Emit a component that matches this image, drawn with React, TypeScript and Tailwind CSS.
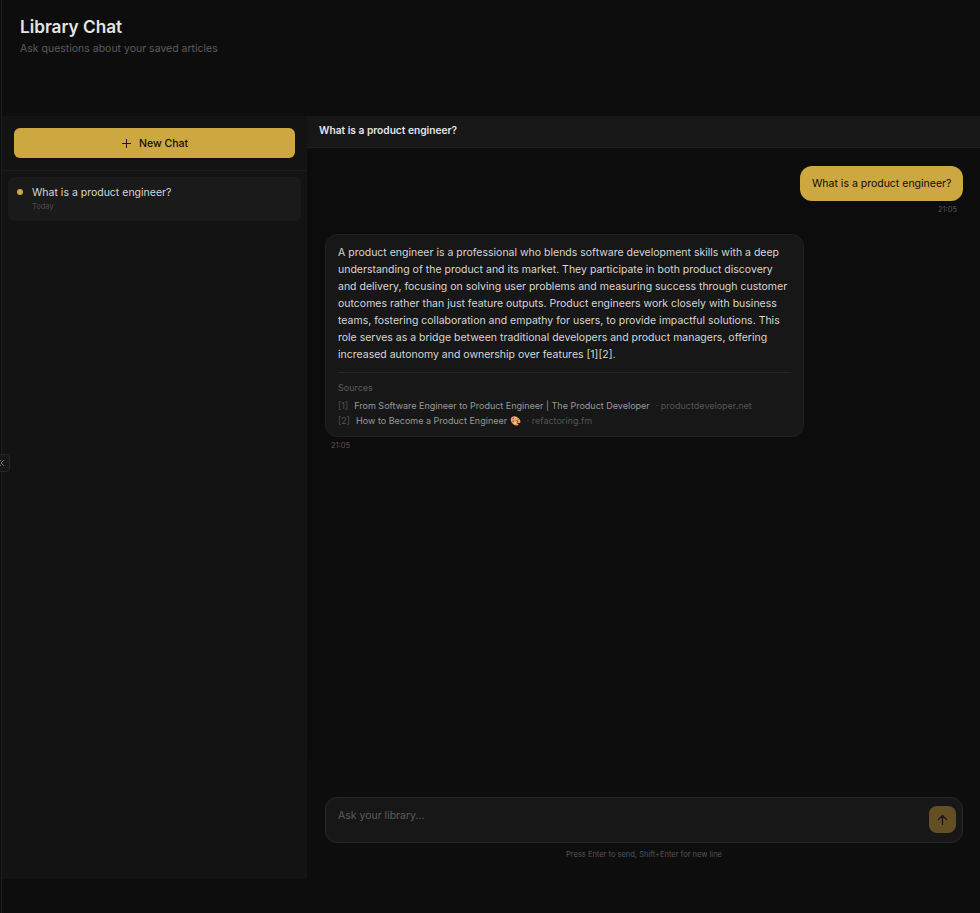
import React from 'react';

const sources = [
  { id: 1, title: 'From Software Engineer to Product Engineer | The Product Developer', site: 'productdeveloper.net' },
  { id: 2, title: 'How to Become a Product Engineer 🎨', site: 'refactoring.fm' },
];

const Sidebar: React.FC = () => {
  return (
    <aside className="flex w-[305px] shrink-0 flex-col bg-[#131313]">
      <div className="border-b border-[#1b1b1b] px-3 pt-3 pb-3">
        <button className="flex h-[30px] w-[281px] items-center justify-center gap-[7px] rounded-md bg-[#cda73f] text-[10.5px] font-medium text-[#0d0d0d]">
          <svg width="11" height="11" viewBox="0 0 11 11" fill="none" stroke="currentColor" strokeWidth="0.9">
            <path d="M5.5 1v9M1 5.5h9" />
          </svg>
          <span className="pt-px">New Chat</span>
        </button>
      </div>
      <div className="px-1.5 pt-1.5">
        <div className="flex h-11 rounded-md bg-[#1a1a1a] pl-[9px]">
          <span className="mt-3 h-1.5 w-1.5 shrink-0 rounded-full bg-[#cda73f]" />
          <div className="ml-[9px] pt-[9px]">
            <p className="text-[10.5px] leading-[14px] text-[#d6d6d6]">What is a product engineer?</p>
            <p className="mt-0.5 text-[7.5px] leading-[9px] text-[#4c4c4c]">Today</p>
          </div>
        </div>
      </div>
    </aside>
  );
};

const Conversation: React.FC = () => {
  return (
    <section className="flex min-w-0 flex-1 flex-col">
      <div className="h-8 shrink-0 border-b border-[#1e1e1e] bg-[#171717] pl-3">
        <h2 className="pt-[7px] text-[10.2px] leading-[14px] font-semibold text-[#e4e4e4]">
          What is a product engineer?
        </h2>
      </div>

      <div className="flex h-[612px] flex-col bg-[#0c0c0c] pr-[17px] pl-[18px] pt-[18px]">
        <div className="flex flex-col items-end">
          <div className="flex h-[35px] w-[163px] items-center rounded-xl bg-[#cda73f] pl-3 text-[10.5px] whitespace-nowrap text-[#0d0d0d]">
            What is a product engineer?
          </div>
          <span className="mt-1 pr-1.5 text-[7.5px] leading-[9px] text-[#555555]">21:05</span>
        </div>

        <div className="mt-5 h-[203px] w-[479px] rounded-xl border border-[#202020] bg-[#171717] px-3 pt-[9px]">
          <p className="text-[10.5px] leading-[17px] text-[#d6d6d6]">
            A product engineer is a professional who blends software development skills with a deep understanding of the
            product and its market. They participate in both product discovery and delivery, focusing on solving user
            problems and measuring success through customer outcomes rather than just feature outputs. Product engineers
            work closely with business teams, fostering collaboration and empathy for users, to provide impactful
            solutions. This role serves as a bridge between traditional developers and product managers, offering
            increased autonomy and ownership over features [1][2].
          </p>
          <div className="mt-[9px] border-t border-[#272727] pt-2">
            <p className="mb-1 text-[9px] leading-[13px] text-[#5c5c5c]">Sources</p>
            {sources.map((source) => (
              <div key={source.id} className="flex h-[15px] items-center text-[9px] whitespace-nowrap text-[#555555]">
                <span>[{source.id}]</span>
                <span className="ml-1.5 text-[#999999]">{source.title}</span>
                <span className="ml-1.5">· {source.site}</span>
              </div>
            ))}
          </div>
        </div>
        <span className="mt-1 pl-1.5 text-[7.5px] leading-[9px] text-[#555555]">21:05</span>
      </div>

      <div className="flex-1 pt-[37px] pr-[17px] pl-[18px]">
        <div className="flex h-[46px] justify-between rounded-xl border border-[#272727] bg-[#171717] pt-2 pr-1.5 pl-3">
          <span className="pt-[3px] text-[10.5px] leading-[14px] text-[#5c5c5c]">Ask your library...</span>
          <button className="flex h-[27px] w-[27px] items-center justify-center rounded-lg bg-[#644f24] text-[#171717]">
            <svg width="11" height="12" viewBox="0 0 11 12" fill="none" stroke="currentColor" strokeWidth="1.2" strokeLinecap="round" strokeLinejoin="round">
              <path d="M5.5 10.5v-9M1.5 5.5l4-4 4 4" />
            </svg>
          </button>
        </div>
        <p className="mt-[7px] text-center text-[7.5px] leading-[10px] text-[#555555]">Press Enter to send, Shift+Enter for new line</p>
      </div>
    </section>
  );
};

const App: React.FC = () => {
  return (
    <div className="relative h-[913px] w-[980px] overflow-hidden bg-[#0d0d0d] pl-px font-['Inter',sans-serif]">
      <div className="flex h-full flex-col border-l border-[#1e1e1e]">
        <header className="h-[116px] shrink-0 pt-4 pl-[18px]">
          <h1 className="text-[17.2px] leading-[22px] font-semibold text-[#e4e4e4]">Library Chat</h1>
          <p className="mt-1 text-[10.5px] leading-[14px] text-[#5c5c5c]">Ask questions about your saved articles</p>
        </header>
        <main className="flex h-[763px]">
          <Sidebar />
          <Conversation />
        </main>
      </div>
      <button className="absolute top-[454px] -left-2 flex h-[18px] w-[18px] items-center justify-center rounded border border-[#272727] bg-[#171717] text-[#888888]">
        <svg width="8" height="8" viewBox="0 0 8 8" fill="none" stroke="currentColor" strokeWidth="0.9">
          <path d="M3.9 1.2L1.1 4l2.8 2.8M6.9 1.2L4.1 4l2.8 2.8" />
        </svg>
      </button>
    </div>
  );
};

export default App;
